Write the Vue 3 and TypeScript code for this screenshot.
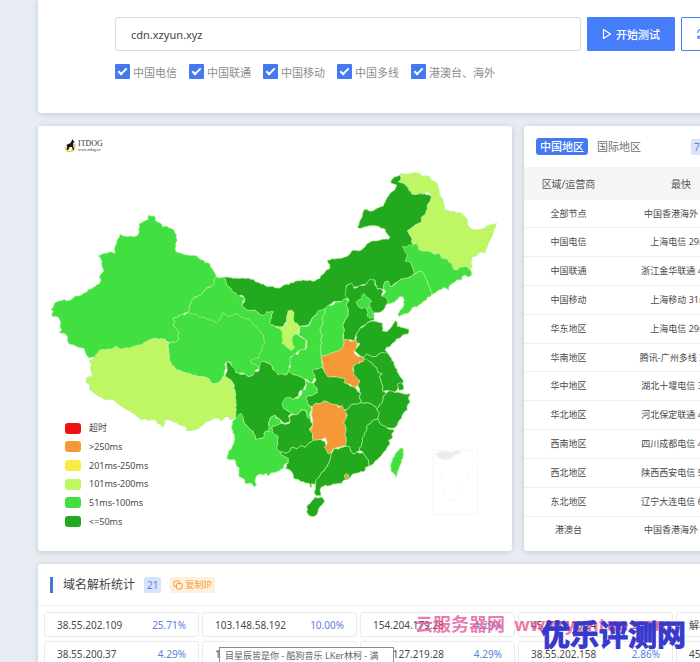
<script setup lang="ts">
import { ref } from 'vue'

interface Region {
  id: string
  level: string
  x: number
  y: number
  points: string
}

const host = ref('cdn.xzyun.xyz')

const lines = ref([
  { id: 'telecom', label: '中国电信', on: true },
  { id: 'unicom', label: '中国联通', on: true },
  { id: 'mobile', label: '中国移动', on: true },
  { id: 'multi', label: '中国多线', on: true },
  { id: 'oversea', label: '港澳台、海外', on: true },
])

const legend = [
  { level: 'timeout', label: '超时' },
  { level: 'slow', label: '>250ms' },
  { level: 'poor', label: '201ms-250ms' },
  { level: 'fair', label: '101ms-200ms' },
  { level: 'good', label: '51ms-100ms' },
  { level: 'best', label: '<=50ms' },
]

const rows = [
  ['全部节点', '中国香港海外 3ms'],
  ['中国电信', '上海电信 29ms'],
  ['中国联通', '浙江金华联通 40ms'],
  ['中国移动', '上海移动 31ms'],
  ['华东地区', '上海电信 29ms'],
  ['华南地区', '腾讯-广州多线 30ms'],
  ['华中地区', '湖北十堰电信 38ms'],
  ['华北地区', '河北保定联通 43ms'],
  ['西南地区', '四川成都电信 47ms'],
  ['西北地区', '陕西西安电信 53ms'],
  ['东北地区', '辽宁大连电信 60ms'],
  ['港澳台', '中国香港海外 3ms'],
]

const addresses = [
  { ip: '38.55.202.109', share: '25.71%' },
  { ip: '103.148.58.192', share: '10.00%' },
  { ip: '154.204.179.28', share: '4.29%' },
  { ip: '45.204.113.24', share: '2.86%' },
  { ip: '解析失败', share: '' },
  { ip: '38.55.200.37', share: '4.29%' },
  { ip: '1', share: '' },
  { ip: '103.127.219.28', share: '4.29%' },
  { ip: '38.55.202.158', share: '2.86%' },
  { ip: '45.204.113.38', share: '' },
]

// Provinces in paint order; points are relative to each region's sheet origin.
const regions: Region[] = [
  { id: 'gansu', level: 'good', x: 0, y: 0, points: '650,832 672,832 680,855 695,870 715,885 733,892 725,915 740,930 765,930 780,945 800,935 820,935 808,970 835,983 895,1005 918,1020 915,1048 898,1052 872,1070 870,1095 860,1125 835,1125 825,1115 815,1095 790,1085 780,1105 750,1120 640,1010 560,950 565,935 572,910 582,892 602,885 615,870 635,858 640,840' },
  { id: 'neimenggu', level: 'best', x: 0, y: 0, points: '672,832 700,835 728,834 745,834 760,838 772,847 790,852 806,860 840,865 852,855 880,848 896,842 930,840 944,843 960,835 966,824 975,815 990,802 982,780 1003,777 1020,775 1040,770 1055,752 1080,752 1100,732 1120,722 1145,718 1165,718 1170,711 1150,685 1130,678 1095,680 1086,684 1072,682 1078,666 1082,658 1088,640 1095,628 1108,633 1120,632 1133,624 1150,618 1156,605 1160,595 1172,578 1184,570 1190,555 1172,548 1174,540 1184,530 1200,525 1203,540 1225,560 1260,575 1295,590 1282,620 1278,640 1265,665 1225,690 1240,735 1225,755 1235,790 1245,820 1235,830 1200,840 1170,860 1155,845 1150,870 1130,865 1125,840 1110,838 1100,852 1060,862 1050,852 1038,860 1045,892 1025,905 1000,905 975,928 955,935 940,950 925,975 900,980 882,965 865,932 860,965 845,985 820,975 808,970 820,935 800,935 792,947 780,945 765,930 740,930 725,915 733,905 735,898 730,888 710,885 695,870 680,855' },
  { id: 'xinjiang', level: 'good', x: 120, y: 600, points: '325,46 342,48 350,65 360,68 368,80 380,78 395,86 402,90 410,105 408,112 412,120 405,145 408,155 415,158 440,165 470,168 478,176 490,180 496,188 508,190 512,202 520,212 530,232 520,240 525,250 515,258 508,260 495,270 482,285 470,290 462,292 456,300 452,310 445,335 425,345 398,357 405,365 400,378 410,388 418,400 413,407 415,420 405,427 388,428 375,418 345,415 320,425 305,435 270,445 240,448 228,440 215,448 180,450 172,465 165,472 148,474 138,462 132,445 115,442 88,432 82,420 82,408 70,400 58,398 65,390 60,378 62,365 55,352 38,350 35,342 40,335 33,328 40,322 42,312 52,305 72,298 80,303 92,300 105,288 118,287 130,280 160,262 178,252 183,240 178,230 183,222 190,215 185,190 183,178 175,168 185,163 200,160 215,156 225,160 223,148 230,130 233,118 240,103 250,108 270,108 280,110 290,108 297,95 297,72 305,68 315,62 325,58' },
  { id: 'qinghai', level: 'good', x: 120, y: 600, points: '398,357 412,352 420,345 435,345 445,337 458,342 465,342 475,350 490,352 502,360 515,360 530,368 545,352 548,338 562,350 575,347 585,341 600,350 610,352 630,360 640,375 650,380 655,390 670,405 675,425 668,435 665,445 660,460 655,475 642,476 632,482 635,490 645,492 658,500 655,507 645,510 647,520 625,530 612,520 600,520 585,520 580,505 575,498 572,487 560,487 555,490 558,505 553,520 545,540 530,550 515,550 505,535 490,530 470,528 440,520 410,510 395,495 388,475 385,455 388,428 405,427 415,420 413,407 418,400 410,388 400,378 405,365' },
  { id: 'xizang', level: 'fair', x: 120, y: 600, points: '148,482 165,472 172,460 180,450 200,448 215,448 228,438 240,448 255,444 270,445 285,438 305,435 312,427 320,425 335,417 345,415 365,416 375,418 385,430 382,445 387,455 385,470 395,495 410,510 440,520 470,528 490,530 505,535 515,550 530,550 545,540 555,528 570,535 580,548 580,560 585,580 590,610 588,640 582,655 575,658 570,660 565,650 555,650 545,662 535,655 520,655 510,662 500,664 490,675 480,680 470,688 460,690 450,692 440,692 437,680 420,675 410,668 400,665 390,660 370,660 375,670 370,682 362,672 355,672 348,660 325,662 318,657 300,657 290,648 280,640 260,630 250,622 230,608 220,598 205,598 190,597 180,590 160,577 148,568 150,555 140,548 138,535 147,530 155,530 155,518 150,505 155,493' },
  { id: 'heilongjiang', level: 'fair', x: 1020, y: 480, points: '180,42 205,42 225,38 238,40 245,47 270,52 277,62 285,65 295,80 300,105 310,125 313,150 335,155 355,158 365,160 375,170 383,180 382,192 390,205 410,210 430,207 440,198 450,195 470,190 466,203 460,215 456,230 450,240 440,262 432,280 420,276 405,290 395,290 393,310 397,318 392,330 382,322 360,320 355,328 345,330 338,320 335,310 327,308 325,300 305,295 300,282 295,280 280,282 270,275 252,274 235,268 230,250 215,250 218,235 202,212 220,200 232,195 245,185 245,170 258,160 262,140 270,125 275,110 265,95 255,98 250,103 240,100 235,103 215,102 205,85 195,72 175,65 185,55' },
  { id: 'jilin', level: 'good', x: 1020, y: 480, points: '187,260 200,262 205,255 218,256 230,250 235,268 252,274 270,275 280,282 295,280 300,282 305,295 325,300 327,308 335,310 338,320 345,330 355,328 360,320 382,322 392,330 395,345 385,352 375,345 366,350 365,360 350,360 345,366 330,375 326,390 312,382 305,388 290,395 275,405 270,385 265,375 262,360 255,350 245,335 235,335 225,342 220,325 210,305 195,303 203,285' },
  { id: 'liaoning', level: 'good', x: 1020, y: 480, points: '225,342 235,335 245,335 255,350 262,360 265,375 270,385 275,405 262,412 255,422 240,432 232,440 215,445 205,460 190,463 178,470 173,462 180,450 190,440 193,420 188,410 178,410 165,425 152,430 143,432 140,420 127,410 137,395 130,385 135,365 145,363 150,380 165,372 180,360 198,355 215,350' },
  { id: 'hebei', level: 'best', x: 660, y: 780, points: '378,85 382,75 395,70 402,85 418,77 440,72 445,62 452,57 465,60 465,75 472,88 480,85 490,95 485,108 500,115 503,130 490,150 475,158 460,160 462,180 440,190 420,205 408,225 405,240 370,240 372,215 368,195 375,180 385,165 385,150 378,135 387,122 378,110' },
  { id: 'beijing', level: 'good', x: 660, y: 780, points: '408,128 412,122 425,118 425,108 432,100 438,110 447,115 455,125 448,130 450,138 443,148 433,142 425,146 415,140' },
  { id: 'tianjin', level: 'good', x: 660, y: 780, points: '440,148 444,142 452,142 455,150 460,155 458,172 450,176 441,168 444,158' },
  { id: 'shandong', level: 'best', x: 660, y: 780, points: '405,245 408,225 420,205 430,200 440,190 462,183 475,187 488,190 489,205 487,212 500,215 508,208 515,200 525,182 532,186 532,200 550,203 567,208 565,222 548,225 543,232 530,236 525,245 515,252 510,260 500,262 495,270 503,278 497,282 480,280 465,290 455,290 440,282 430,292 410,278 402,270 412,262 420,250' },
  { id: 'shanxi', level: 'good', x: 660, y: 780, points: '315,145 325,135 340,135 345,127 365,125 375,115 387,122 378,135 385,150 385,165 375,180 368,195 372,215 370,238 370,258 362,268 345,275 325,283 303,290 300,265 306,250 303,235 304,220 300,205 308,190 306,175 315,160' },
  { id: 'shaanxi', level: 'good', x: 660, y: 780, points: '295,152 306,150 315,145 315,160 306,175 308,190 300,205 304,220 303,235 306,250 300,265 303,290 305,305 308,322 285,330 282,342 288,350 280,358 275,370 258,358 240,350 225,345 215,345 203,335 212,318 210,295 225,280 232,285 238,272 258,268 260,240 245,230 235,225 240,200 255,200 268,195 280,170 290,165' },
  { id: 'ningxia', level: 'fair', x: 660, y: 780, points: '205,152 215,150 222,158 220,175 218,187 232,190 240,200 235,208 233,220 222,225 215,240 217,252 225,262 215,272 205,265 195,255 185,250 190,240 187,225 183,210 172,203 190,200 200,192 200,175' },
  { id: 'sichuan', level: 'best', x: 660, y: 1080, points: '20,5 30,8 35,18 45,28 47,38 60,43 75,42 87,50 100,45 102,36 115,35 118,22 125,5 140,8 155,15 160,30 170,38 175,45 187,42 200,45 205,35 225,45 240,50 250,55 258,68 250,90 240,92 235,110 215,118 195,120 190,140 200,150 220,160 205,168 210,185 195,190 180,178 165,165 150,175 146,195 148,215 135,215 130,235 107,238 100,215 87,205 73,190 65,170 48,175 48,130 45,90 40,70 25,55 15,48 22,32' },
  { id: 'yunnan', level: 'good', x: 660, y: 1080, points: '48,175 55,165 63,160 70,172 73,190 87,205 100,215 107,238 120,235 130,235 135,215 148,215 146,195 150,175 165,165 168,175 180,178 185,190 170,196 155,202 160,220 175,230 173,245 170,265 180,276 185,285 205,295 205,308 192,315 190,325 170,335 155,338 145,348 138,340 130,345 120,342 108,350 105,365 110,375 103,380 95,370 75,370 73,358 57,350 58,325 50,318 45,300 30,300 20,295 25,275 35,265 42,250 43,225 35,205 37,185' },
  { id: 'guizhou', level: 'best', x: 660, y: 1080, points: '155,202 170,196 185,190 195,193 210,188 208,175 215,165 235,162 240,152 255,150 262,170 272,178 278,195 268,208 278,220 280,240 265,250 255,262 240,258 232,266 215,262 210,272 195,280 180,276 170,265 173,245 175,230 160,220' },
  { id: 'chongqing', level: 'good', x: 660, y: 1080, points: '258,62 270,68 280,70 292,85 292,98 280,105 265,108 258,118 262,130 272,140 275,150 268,165 272,178 262,172 258,150 245,148 230,165 215,160 205,153 190,145 186,130 195,115 210,112 220,118 235,115 245,105 246,92 258,88' },
  { id: 'hubei', level: 'best', x: 660, y: 1080, points: '280,40 280,28 305,22 312,30 325,50 350,50 375,55 375,68 390,78 405,80 412,92 422,100 418,112 425,128 405,132 390,138 378,150 355,137 335,132 312,122 302,130 290,130 277,140 262,130 258,118 265,108 280,105 292,98 292,85 280,70 288,58' },
  { id: 'henan', level: 'slow', x: 660, y: 780, points: '370,238 390,243 410,243 412,255 402,272 407,285 418,290 432,295 432,308 420,305 412,312 400,318 398,330 405,342 418,350 418,370 408,380 400,382 388,372 372,368 375,355 350,350 325,352 312,330 308,315 303,290 325,283 345,275 362,268 370,258' },
  { id: 'guangxi', level: 'best', x: 660, y: 1080, points: '180,276 195,280 210,272 215,262 232,266 240,258 255,262 265,250 280,240 300,238 315,245 320,262 325,278 335,280 330,300 322,320 308,335 298,350 290,358 287,372 275,370 274,385 270,372 245,365 235,358 220,355 215,335 205,328 195,325 205,308 205,295 185,285' },
  { id: 'guangdong', level: 'best', x: 660, y: 1080, points: '335,280 345,265 355,268 378,258 390,262 400,282 410,275 420,280 430,278 445,300 448,318 437,322 435,332 410,340 395,345 385,358 372,360 365,370 340,372 330,377 315,375 303,382 300,392 302,408 290,408 283,395 287,372 290,358 298,350 308,335 322,320 330,300' },
  { id: 'hunan', level: 'slow', x: 660, y: 1080, points: '277,140 290,130 302,130 312,122 335,132 350,133 355,143 365,135 370,148 380,150 380,172 372,190 378,205 376,220 378,240 378,258 355,262 342,265 335,275 325,282 320,270 312,262 322,250 318,235 300,238 280,240 278,220 270,212 278,198 276,170' },
  { id: 'hainan', level: 'best', x: 660, y: 1080, points: '285,412 295,414 303,411 313,420 308,432 300,440 293,460 280,470 265,465 260,455 262,435 272,428' },
  { id: 'anhui', level: 'best', x: 660, y: 1080, points: '412,10 430,5 432,-5 445,-5 450,5 460,15 470,22 475,38 487,42 478,50 485,70 490,95 500,98 490,108 485,130 470,147 455,132 440,128 425,128 418,112 422,100 415,80 418,60 400,40 400,20' },
  { id: 'jiangsu', level: 'best', x: 660, y: 780, points: '430,292 440,282 455,290 465,290 480,280 500,278 515,295 525,318 535,340 540,350 550,362 548,372 535,375 530,392 520,400 508,392 490,395 485,370 478,350 487,342 475,338 470,322 460,315 450,305' },
  { id: 'jiangxi', level: 'best', x: 660, y: 1080, points: '378,150 390,138 405,132 425,128 440,128 455,132 470,147 478,160 473,177 455,185 440,200 438,215 428,232 425,250 418,272 410,275 400,282 390,262 378,258 378,240 376,220 378,205 372,190 380,172' },
  { id: 'fujian', level: 'best', x: 660, y: 1080, points: '473,177 485,195 500,203 508,208 524,212 515,222 518,232 506,240 510,250 500,265 492,275 480,290 465,303 460,312 448,318 445,300 430,278 418,272 425,250 428,232 438,215 440,200 455,185' },
  { id: 'zhejiang', level: 'best', x: 660, y: 1080, points: '500,98 508,92 525,98 540,98 552,102 572,102 565,115 570,125 562,135 562,150 550,160 545,175 535,185 532,195 520,205 500,203 485,195 473,177 478,160 470,147 485,130 490,108' },
  { id: 'shanghai', level: 'best', x: 660, y: 1080, points: '532,72 542,68 550,76 550,90 538,92' },
  { id: 'taiwan', level: 'good', x: 660, y: 1080, points: '540,265 549,264 550,280 545,300 537,325 528,353 523,342 513,333 512,318 518,295 528,278' },
]

// Breaks each long edge into short wavering steps. Offsets depend only on the
// edge's own end points, so neighbours that share an edge keep the same line.
function outline(region: Region): string {
  const pts = region.points
    .split(' ')
    .map((pair) => pair.split(',').map(Number))
    .map(([px, py]) => [px + region.x, py + region.y])
  const out: string[] = []
  pts.forEach((a, i) => {
    const b = pts[(i + 1) % pts.length]
    out.push(`${a[0]},${a[1]}`)
    const forward = a[0] < b[0] || (a[0] === b[0] && a[1] < b[1])
    const [p, q] = forward ? [a, b] : [b, a]
    const length = Math.hypot(q[0] - p[0], q[1] - p[1])
    const steps = Math.floor(length / 6)
    const middle: string[] = []
    for (let k = 1; k < steps; k++) {
      const t = k / steps
      const noise = Math.sin(p[0] * 12.9898 + p[1] * 78.233 + k * 37.719) * 43758.5453
      const shift = (noise - Math.floor(noise) - 0.5) * 4.5
      const mx = p[0] + (q[0] - p[0]) * t - ((q[1] - p[1]) / length) * shift
      const my = p[1] + (q[1] - p[1]) * t + ((q[0] - p[0]) / length) * shift
      middle.push(`${mx.toFixed(1)},${my.toFixed(1)}`)
    }
    out.push(...(forward ? middle : middle.reverse()))
  })
  return out.join(' ')
}

const shapes = regions.map((r) => ({ id: r.id, level: r.level, points: outline(r) }))
</script>

<template>
  <div class="page">
    <main class="content">
      <section class="card search">
        <form class="form" @submit.prevent>
          <input v-model="host" class="host" type="text" aria-label="域名" />
          <button class="btn primary" type="submit">
            <svg class="play" viewBox="0 0 10 12" aria-hidden="true">
              <path d="M1.5 1.5v9L8.5 6z" fill="none" stroke="currentColor" stroke-width="1.2" stroke-linejoin="round" />
            </svg>
            开始测试
          </button>
          <button class="btn outline" type="button" aria-label="快捷">
            <svg class="cycle" viewBox="0 0 12 12" aria-hidden="true">
              <path d="M1.5 5a4.5 4.5 0 0 1 8.5-1.500M10.500 7a4.500 4.500 0 0 1-8.500 1.500M10 1v2.700H7.300M2 11V8.300h2.700" fill="none" stroke="currentColor" stroke-width="1.2" />
            </svg>
          </button>
        </form>
        <div class="checks">
          <label v-for="line in lines" :key="line.id" class="check">
            <input v-model="line.on" type="checkbox" />
            <span>{{ line.label }}</span>
          </label>
        </div>
      </section>

      <div class="columns">
        <section class="card map">
          <svg class="china" viewBox="114 378 1422 1275" role="img" aria-label="中国">
            <polygon
              v-for="shape in shapes"
              :key="shape.id"
              :class="['region', shape.level]"
              :points="shape.points"
            />
            <circle class="region slow" cx="1040" cy="1429" r="7" />
            <rect class="inset" x="1300" y="1351" width="133" height="192" />
            <path class="islands" d="M1305 1358l24-4 30 2 18-5 4 8-16 6-12 12-20 4-16-6z" />
            <path class="dashes" d="M1418 1358l3 16M1424 1388l-6 14M1330 1420l-5 18M1326 1462l7 17M1410 1420l-9 17M1392 1460l-12 14M1360 1496l-16 5" />
          </svg>
          <div class="brand">
            <svg class="dog" viewBox="0 0 14 16" aria-hidden="true">
              <path d="M1.500 9.500C1 13 4 15 7.500 14.300 11 13.600 12.300 10 11.500 6" fill="none" stroke="#e5cf35" stroke-width="1.500" />
              <path d="M9.300 1l.7 2 1.700 1.200-1.800.8.100 4 .800 3.500H9.300L8.500 9.500 6 9.600 4.800 12.500H2.800L3.500 9 2.500 7.500 7 5.300z" fill="#151515" />
            </svg>
            <div class="brand-text">
              <span class="brand-name">ITDOG</span>
              <span class="brand-site">www.itdog.cn</span>
            </div>
          </div>
          <ul class="legend">
            <li v-for="item in legend" :key="item.level">
              <i :class="['swatch', item.level]"></i>{{ item.label }}
            </li>
          </ul>
        </section>

        <section class="card stats">
          <div class="tabs">
            <button class="tab active" type="button">中国地区</button>
            <button class="tab" type="button">国际地区</button>
            <span class="badge blue count">70</span>
          </div>
          <table class="table">
            <thead>
              <tr><th class="area">区域/运营商</th><th>最快</th></tr>
            </thead>
            <tbody>
              <tr v-for="row in rows" :key="row[0]">
                <td>{{ row[0] }}</td>
                <td>{{ row[1] }}</td>
              </tr>
            </tbody>
          </table>
        </section>
      </div>

      <section class="card dns">
        <header class="dns-head">
          <h2>域名解析统计</h2>
          <span class="badge blue">21</span>
          <button class="badge copy" type="button">
            <svg class="copy-icon" viewBox="0 0 10 10" aria-hidden="true">
              <path d="M6.500 3.500V2q0-1-1-1H2Q1 1 1 2v3.500q0 1 1 1h1.500" fill="none" stroke="currentColor" />
              <rect x="3.500" y="3.500" width="5.500" height="5.500" rx="1" fill="none" stroke="currentColor" />
            </svg>
            复制IP
          </button>
        </header>
        <ul class="ips">
          <li v-for="item in addresses" :key="item.ip">
            <span>{{ item.ip }}</span><span class="share">{{ item.share }}</span>
          </li>
        </ul>
      </section>
    </main>

    <div class="tooltip">目星辰皆是你 - 酷狗音乐 LKer林柯 - 满</div>
    <div class="mark pink">云服务器网&nbsp; www.yuntue.com</div>
    <div class="mark indigo">优乐评测网</div>
  </div>
</template>

<style>
body {
  background: #e9edf3;
}
</style>

<style scoped>
.page {
  position: relative;
  height: 100vh;
  overflow: hidden;
  background: #e9edf3;
  color: #4a4a4a;
  font-family: "Noto Sans", "Noto Sans CJK SC", sans-serif;
  font-size: 10px;
}
.content {
  width: calc(100% + 99px);
  padding-left: 38px;
  display: flex;
  flex-direction: column;
  gap: 13px;
}
button,
input {
  font-family: inherit;
  margin: 0;
}
ul {
  list-style: none;
  margin: 0;
  padding: 0;
}
.card {
  background: #fff;
  border-radius: 3px;
  box-shadow: 0 1px 6px rgba(100, 112, 135, 0.3);
}
.search {
  border-radius: 0 0 3px 3px;
  padding: 17px 68px 33px 77px;
}
.form {
  display: flex;
  gap: 6px;
}
.host {
  flex: 1;
  min-width: 0;
  height: 34px;
  box-sizing: border-box;
  padding: 0 15px;
  border: 1px solid #dcdcdc;
  border-radius: 3px;
  background: #fff;
  color: #444;
  font-size: 11px;
  outline: none;
}
.btn {
  width: 88px;
  height: 34px;
  box-sizing: border-box;
  display: flex;
  align-items: center;
  justify-content: center;
  gap: 4px;
  padding: 0;
  border: 1px solid #467dfa;
  border-radius: 1px;
  font-size: 11px;
}
.primary {
  background: #467dfa;
  color: #fff;
  font-weight: 500;
}
.outline {
  justify-content: flex-start;
  padding-left: 14px;
  background: #fff;
  color: #467dfa;
}
.play {
  width: 10px;
  height: 12px;
}
.cycle {
  width: 12px;
  height: 12px;
}
.checks {
  display: flex;
  gap: 12px;
  margin-top: 12px;
}
.check {
  display: flex;
  align-items: center;
  gap: 3px;
  height: 17px;
  color: #8e8e8e;
  font-size: 11px;
  white-space: nowrap;
}
.check input {
  appearance: none;
  width: 15px;
  height: 15px;
  border-radius: 1px;
  background: #4479f2;
  display: grid;
  place-items: center;
}
.check input::before {
  content: "";
  width: 7px;
  height: 3px;
  border: solid #fff;
  border-width: 0 0 2px 2px;
  transform: translateY(-1px) rotate(-45deg);
}
.columns {
  display: grid;
  grid-template-columns: 474fr 313fr;
  gap: 12px;
}
.map {
  position: relative;
}
.china {
  display: block;
  width: 100%;
}
.region {
  stroke: #b4f096;
  stroke-width: 2;
  stroke-linejoin: round;
}
.timeout { background: #ee1111; }
.slow { background: #f79838; fill: #f79838; }
.poor { background: #f8ed43; }
.fair { background: #bef763; fill: #bef763; }
.good { background: #41df40; fill: #41df40; }
.best { background: #22a91e; fill: #22a91e; }
.inset {
  fill: none;
  stroke: #f6f6f6;
  stroke-width: 3;
}
.islands {
  fill: #ececec;
}
.dashes {
  fill: none;
  stroke: #f5f5f5;
  stroke-width: 3;
}
.brand {
  position: absolute;
  top: 12px;
  left: 26px;
  display: flex;
  gap: 1px;
}
.dog {
  width: 13px;
  height: 15px;
}
.brand-text {
  display: flex;
  flex-direction: column;
  padding-top: 2px;
  color: #333;
  font-family: "Liberation Serif", serif;
}
.brand-name {
  font-size: 8px;
  line-height: 8px;
}
.brand-site {
  font-size: 4px;
  line-height: 4px;
}
.legend {
  position: absolute;
  left: 27px;
  bottom: 20px;
  height: 112px;
  display: grid;
}
.legend li {
  display: flex;
  align-items: center;
  gap: 8px;
  font-size: 9px;
  line-height: 12px;
}
.swatch {
  width: 16px;
  height: 11px;
  border-radius: 3px;
}
.tabs {
  display: flex;
  align-items: center;
  height: 41px;
  padding-left: 12px;
}
.tab {
  height: 17px;
  padding: 0 4px;
  border: 0;
  border-radius: 3px;
  background: none;
  color: #707070;
  font-size: 11px;
  line-height: 17px;
  margin-right: 5px;
}
.tab.active {
  background: #4479f2;
  color: #fff;
  font-weight: 500;
}
.badge {
  height: 16px;
  box-sizing: border-box;
  padding: 0 3px;
  border: 0;
  border-radius: 2px;
  font-size: 10px;
  line-height: 16px;
}
.blue {
  background: #d9e4fc;
  color: #5a82e6;
}
.count {
  margin-left: 41px;
}
.table {
  width: 225px;
  height: 377px;
  table-layout: fixed;
  border-collapse: collapse;
}
.table th,
.table td {
  padding: 0;
  text-align: center;
  white-space: nowrap;
}
.table th {
  height: 33px;
  background: #f5f5f5;
  color: #555;
  font-size: 10px;
  font-weight: 400;
}
.table .area {
  width: 89px;
}
.table td {
  border-bottom: 1px solid #eeeeee;
  font-size: 9px;
  line-height: 12px;
}
.table tr:last-child td {
  border-bottom: 0;
}
.dns-head {
  display: flex;
  align-items: center;
  height: 42px;
  box-sizing: border-box;
  padding-left: 12px;
  border-bottom: 1px solid #eeeeee;
}
.dns-head h2 {
  margin: 0 9px 0 0;
  padding-left: 10px;
  border-left: 3px solid #4479d8;
  color: #444;
  font-size: 12px;
  font-weight: 400;
  line-height: 16px;
}
.copy {
  display: flex;
  align-items: center;
  gap: 2px;
  margin-left: 9px;
  background: #fff0dc;
  color: #f8a03a;
  font-size: 9px;
}
.copy-icon {
  width: 10px;
  height: 10px;
}
.ips {
  display: grid;
  grid-template-columns: repeat(5, minmax(0, 1fr));
  gap: 4px 3px;
  padding: 6px;
}
.ips li {
  display: flex;
  align-items: center;
  justify-content: space-between;
  height: 25px;
  box-sizing: border-box;
  padding: 0 12px;
  border: 1px solid #ebebeb;
  border-radius: 3px;
}
.share {
  color: #5c80e0;
}
.tooltip {
  position: absolute;
  left: 219px;
  top: 647px;
  padding: 0 14px 0 5px;
  border: 1px solid #8a8a8a;
  background: #fff;
  color: #666;
  font-size: 9px;
  line-height: 16px;
  white-space: nowrap;
}
.mark {
  position: absolute;
  font-weight: 700;
  white-space: nowrap;
}
.pink {
  left: 415px;
  top: 613px;
  color: rgba(229, 80, 145, 0.75);
  font-size: 18px;
  line-height: 22px;
}
.indigo {
  left: 541px;
  top: 617px;
  color: #3838cc;
  font-size: 29px;
  line-height: 36px;
  -webkit-text-stroke: 1px #3838cc;
}
</style>
